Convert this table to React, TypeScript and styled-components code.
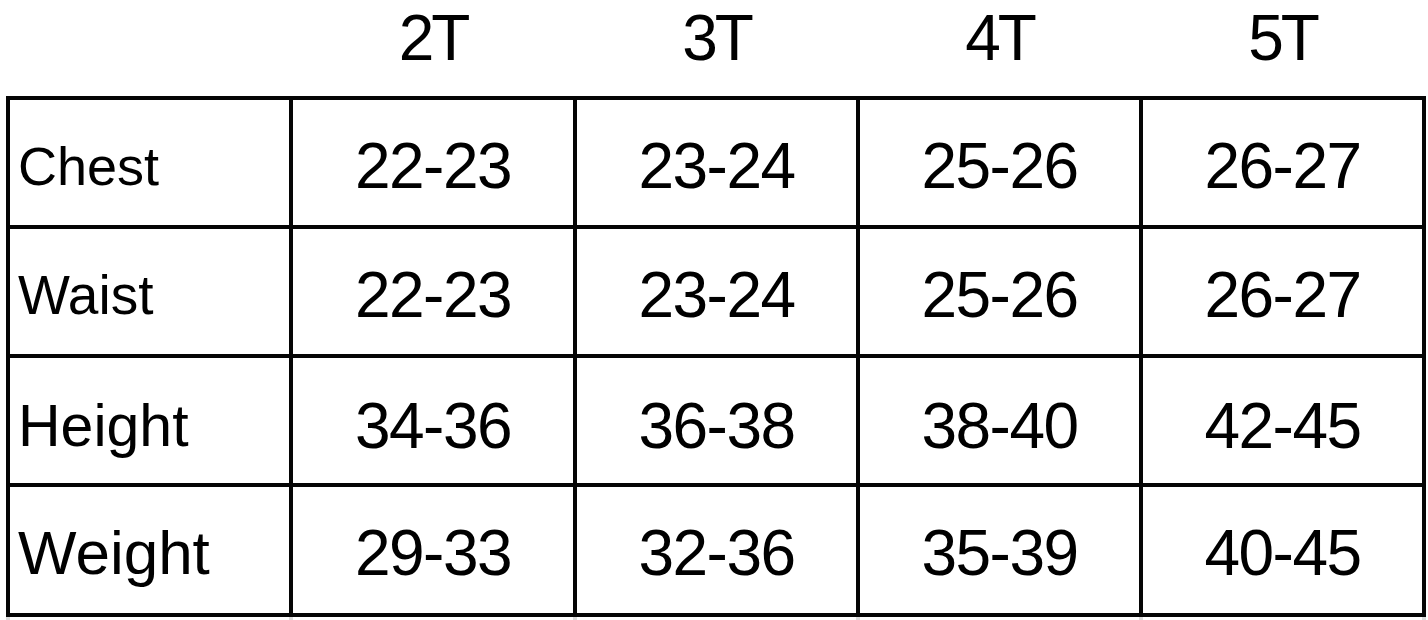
import React from 'react';
import styled, { createGlobalStyle } from 'styled-components';

const GlobalStyle = createGlobalStyle`
  html, body {
    margin: 0;
    padding: 0;
    background: #ffffff;
  }
  body {
    font-family: "Liberation Sans", Arial, sans-serif;
    color: #000000;
  }
`;

const COLUMNS = '279px 280px 279px 279px 279px';

const Page = styled.div`
  width: 1428px;
  height: 620px;
  padding-left: 6px;
  box-sizing: border-box;
  overflow: hidden;
`;

const HeaderRow = styled.div`
  display: grid;
  grid-template-columns: ${COLUMNS};
  column-gap: 4px;
  padding: 0 4px;
  height: 96px;
`;

const HeaderCell = styled.div`
  display: flex;
  justify-content: center;
  align-items: flex-start;
  padding-top: 6px;
  font-size: 64px;
  line-height: 1;
  letter-spacing: -3px;
`;

const Grid = styled.div`
  display: grid;
  grid-template-columns: ${COLUMNS};
  grid-template-rows: 125px 125px 125px 126px;
  gap: 4px;
  padding: 4px;
  background: #050505;
  width: max-content;
`;

const Cell = styled.div<{ $shift: number }>`
  background: #ffffff;
  display: flex;
  align-items: center;
  justify-content: center;
  padding-top: ${(p) => p.$shift}px;
  box-sizing: border-box;
  font-size: 64px;
  line-height: 1;
  letter-spacing: -1.5px;
`;

const LabelCell = styled(Cell)<{ $size: number }>`
  justify-content: flex-start;
  padding-left: 8px;
  font-size: ${(p) => p.$size}px;
  letter-spacing: 0;
`;

const Tail = styled.div`
  display: grid;
  grid-template-columns: ${COLUMNS};
  column-gap: 4px;
  padding: 0 4px;
  height: 3px;
  background: #dcdcdc;
  width: max-content;
`;

const TailGap = styled.div`
  background: #ffffff;
`;

const sizes = ['2T', '3T', '4T', '5T'];

const rows = [
  { label: 'Chest', size: 54, shift: 7, values: ['22-23', '23-24', '25-26', '26-27'] },
  { label: 'Waist', size: 55, shift: 7, values: ['22-23', '23-24', '25-26', '26-27'] },
  { label: 'Height', size: 59, shift: 11, values: ['34-36', '36-38', '38-40', '42-45'] },
  { label: 'Weight', size: 62, shift: 6, values: ['29-33', '32-36', '35-39', '40-45'] },
];

export default function App() {
  return (
    <>
      <GlobalStyle />
      <Page>
        <HeaderRow>
          <div />
          {sizes.map((s) => (
            <HeaderCell key={s}>{s}</HeaderCell>
          ))}
        </HeaderRow>
        <Grid>
          {rows.map((row) => (
            <React.Fragment key={row.label}>
              <LabelCell $size={row.size} $shift={row.shift}>{row.label}</LabelCell>
              {row.values.map((v, i) => (
                <Cell key={i} $shift={row.shift}>{v}</Cell>
              ))}
            </React.Fragment>
          ))}
        </Grid>
        <Tail>
          {[0, 1, 2, 3, 4].map((i) => (
            <TailGap key={i} />
          ))}
        </Tail>
      </Page>
    </>
  );
}
